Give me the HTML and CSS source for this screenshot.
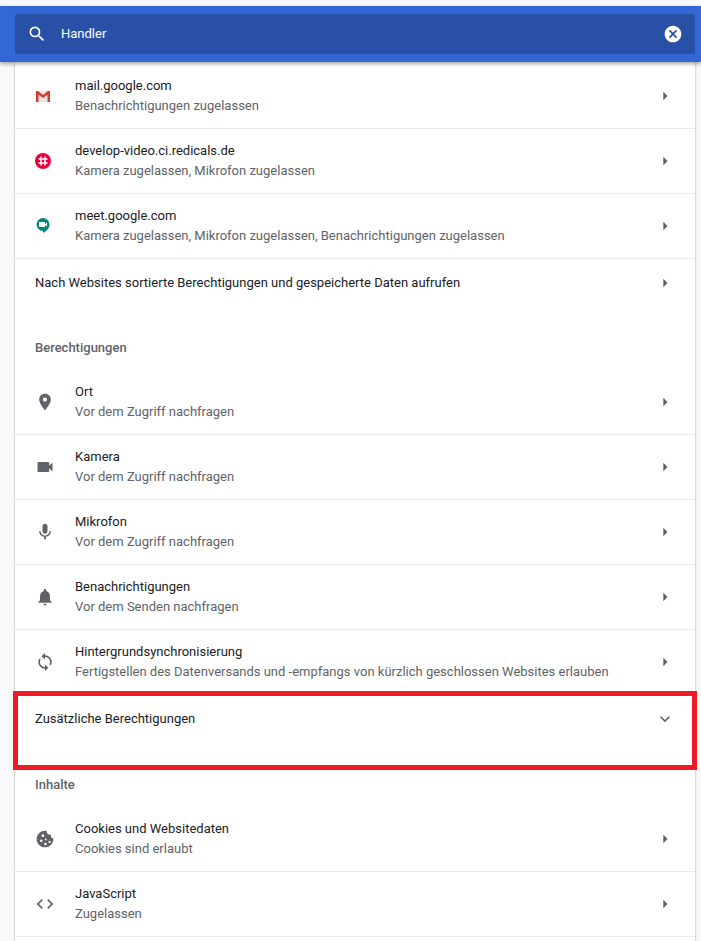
FILE: index.html
```html
<!DOCTYPE html>
<html lang="de">
<head>
    <meta charset="UTF-8">
    <meta name="viewport" content="width=device-width, initial-scale=1.0">
    <title>Einstellungen</title>
    <link rel="stylesheet" href="styles.css">
</head>
<body>
    <header class="topbar">
        <div class="search">
            <svg class="search-icon" viewBox="0 0 24 24"><path d="M15.5 14h-.79l-.28-.27A6.471 6.471 0 0 0 16 9.5 6.5 6.5 0 1 0 9.5 16c1.61 0 3.09-.59 4.23-1.57l.27.28v.79l5 4.99L20.49 19l-4.99-5zm-6 0C7.01 14 5 11.99 5 9.5S7.01 5 9.5 5 14 7.01 14 9.5 11.99 14 9.5 14z"/></svg>
            <span class="search-text">Handler</span>
            <svg class="clear-icon" viewBox="0 0 24 24"><path d="M12 2C6.47 2 2 6.47 2 12s4.47 10 10 10 10-4.47 10-10S17.53 2 12 2zm5 13.59L15.59 17 12 13.41 8.41 17 7 15.59 10.59 12 7 8.41 8.41 7 12 10.59 15.59 7 17 8.41 13.41 12 17 15.59z"/></svg>
        </div>
    </header>

    <main class="card">
        <div class="row first">
            <span class="icon">
                <svg class="favicon" viewBox="0 0 16 16">
                    <path fill="#e8e6e3" d="M1 3h14v11H1z"/>
                    <path fill="#d23f31" d="M1 3h2l5 4 5-4h2v11h-2.500V6.800L8 10 3.500 6.800V14H1z"/>
                </svg>
            </span>
            <div class="labels">
                <div class="title">mail.google.com</div>
                <div class="sub">Benachrichtigungen zugelassen</div>
            </div>
            <svg class="arrow" viewBox="0 0 24 24"><path d="M10 7l5 5-5 5z"/></svg>
        </div>
        <div class="row">
            <span class="icon">
                <svg class="favicon" viewBox="0 0 16 16">
                    <circle cx="8" cy="8" r="8" fill="#e8003d"/>
                    <path fill="none" stroke="#fff" stroke-width="1.400" d="M6 3.500v9M10 3.500v9M3.500 6h9M3.500 10h9"/>
                </svg>
            </span>
            <div class="labels">
                <div class="title">develop-video.ci.redicals.de</div>
                <div class="sub">Kamera zugelassen, Mikrofon zugelassen</div>
            </div>
            <svg class="arrow" viewBox="0 0 24 24"><path d="M10 7l5 5-5 5z"/></svg>
        </div>
        <div class="row">
            <span class="icon">
                <svg class="favicon" viewBox="0 0 16 16">
                    <path fill="#00897b" d="M8 0a6.500 6.500 0 0 0-6.500 6.500A6.500 6.500 0 0 0 8 13v2c3.500-1.500 6.500-4.800 6.500-8.500A6.500 6.500 0 0 0 8 0z"/>
                    <path fill="#fff" d="M4.500 4h5c.3 0 .5.200.5.500V6l2-1.500v4L10 7v1.500c0 .3-.2.500-.5.500h-5c-.3 0-.5-.2-.5-.5v-4c0-.3.200-.5.500-.5z"/>
                </svg>
            </span>
            <div class="labels">
                <div class="title">meet.google.com</div>
                <div class="sub">Kamera zugelassen, Mikrofon zugelassen, Benachrichtigungen zugelassen</div>
            </div>
            <svg class="arrow" viewBox="0 0 24 24"><path d="M10 7l5 5-5 5z"/></svg>
        </div>
        <div class="row short">
            <div class="labels title">Nach Websites sortierte Berechtigungen und gespeicherte Daten aufrufen</div>
            <svg class="arrow" viewBox="0 0 24 24"><path d="M10 7l5 5-5 5z"/></svg>
        </div>

        <h2 class="heading">Berechtigungen</h2>

        <div class="row first">
            <span class="icon"><svg viewBox="0 0 24 24"><path d="M12 2C8.130 2 5 5.130 5 9c0 5.250 7 13 7 13s7-7.750 7-13c0-3.870-3.130-7-7-7zm0 9.500c-1.380 0-2.500-1.120-2.500-2.500s1.120-2.500 2.500-2.500 2.500 1.120 2.500 2.500-1.120 2.500-2.500 2.500z"/></svg></span>
            <div class="labels">
                <div class="title">Ort</div>
                <div class="sub">Vor dem Zugriff nachfragen</div>
            </div>
            <svg class="arrow" viewBox="0 0 24 24"><path d="M10 7l5 5-5 5z"/></svg>
        </div>
        <div class="row">
            <span class="icon"><svg viewBox="0 0 24 24"><path d="M17 10.500V7c0-.55-.45-1-1-1H4c-.55 0-1 .45-1 1v10c0 .55.45 1 1 1h12c.55 0 1-.45 1-1v-3.500l4 4v-11l-4 4z"/></svg></span>
            <div class="labels">
                <div class="title">Kamera</div>
                <div class="sub">Vor dem Zugriff nachfragen</div>
            </div>
            <svg class="arrow" viewBox="0 0 24 24"><path d="M10 7l5 5-5 5z"/></svg>
        </div>
        <div class="row">
            <span class="icon"><svg viewBox="0 0 24 24"><path d="M12 14c1.660 0 2.990-1.340 2.990-3L15 5c0-1.660-1.340-3-3-3S9 3.340 9 5v6c0 1.660 1.340 3 3 3zm5.300-3c0 3-2.540 5.100-5.300 5.100S6.700 14 6.700 11H5c0 3.410 2.720 6.230 6 6.720V21h2v-3.280c3.280-.48 6-3.300 6-6.720h-1.700z"/></svg></span>
            <div class="labels">
                <div class="title">Mikrofon</div>
                <div class="sub">Vor dem Zugriff nachfragen</div>
            </div>
            <svg class="arrow" viewBox="0 0 24 24"><path d="M10 7l5 5-5 5z"/></svg>
        </div>
        <div class="row">
            <span class="icon"><svg viewBox="0 0 24 24"><path d="M12 22c1.100 0 2-.9 2-2h-4c0 1.100.9 2 2 2zm6-6v-5c0-3.070-1.630-5.640-4.500-6.320V4c0-.83-.67-1.500-1.500-1.500s-1.500.67-1.500 1.500v.68C7.640 5.360 6 7.920 6 11v5l-2 2v1h16v-1l-2-2z"/></svg></span>
            <div class="labels">
                <div class="title">Benachrichtigungen</div>
                <div class="sub">Vor dem Senden nachfragen</div>
            </div>
            <svg class="arrow" viewBox="0 0 24 24"><path d="M10 7l5 5-5 5z"/></svg>
        </div>
        <div class="row">
            <span class="icon"><svg viewBox="0 0 24 24"><path d="M12 4V1L8 5l4 4V6c3.310 0 6 2.690 6 6 0 1.010-.25 1.970-.7 2.800l1.460 1.460C19.540 15.030 20 13.570 20 12c0-4.420-3.580-8-8-8zm0 14c-3.310 0-6-2.690-6-6 0-1.010.25-1.970.7-2.800L5.240 7.740C4.460 8.970 4 10.430 4 12c0 4.420 3.580 8 8 8v3l4-4-4-4v3z"/></svg></span>
            <div class="labels">
                <div class="title">Hintergrundsynchronisierung</div>
                <div class="sub">Fertigstellen des Datenversands und -empfangs von kürzlich geschlossen Websites erlauben</div>
            </div>
            <svg class="arrow" viewBox="0 0 24 24"><path d="M10 7l5 5-5 5z"/></svg>
        </div>
        <div class="row short marked">
            <div class="labels title">Zusätzliche Berechtigungen</div>
            <svg class="arrow" viewBox="0 0 24 24"><path d="M16.590 8.590L12 13.170 7.410 8.590 6 10l6 6 6-6z"/></svg>
            <div class="highlight"></div>
        </div>

        <h2 class="heading contents">Inhalte</h2>

        <div class="row first">
            <span class="icon">
                <svg viewBox="0 0 24 24">
                    <path d="M21.950 10.990c-1.790-.03-3.700-1.950-2.680-4.220-2.980 1-5.770-1.590-5.190-4.560C6.950.71 2 6.580 2 12c0 5.520 4.480 10 10 10 5.890 0 10.540-5.080 9.950-11.010z"/>
                    <g class="holes">
                        <circle cx="9.500" cy="8" r="1.600"/>
                        <circle cx="7.500" cy="14" r="1.500"/>
                        <circle cx="13" cy="12.500" r="1"/>
                        <circle cx="12.500" cy="18" r="1.500"/>
                        <circle cx="17.500" cy="15.500" r="1.300"/>
                    </g>
                </svg>
            </span>
            <div class="labels">
                <div class="title">Cookies und Websitedaten</div>
                <div class="sub">Cookies sind erlaubt</div>
            </div>
            <svg class="arrow" viewBox="0 0 24 24"><path d="M10 7l5 5-5 5z"/></svg>
        </div>
        <div class="row">
            <span class="icon"><svg viewBox="0 0 24 24"><path d="M9.400 16.600L4.800 12l4.600-4.600L8 6l-6 6 6 6 1.400-1.400zm5.200 0l4.600-4.600-4.600-4.600L16 6l6 6-6 6-1.400-1.400z"/></svg></span>
            <div class="labels">
                <div class="title">JavaScript</div>
                <div class="sub">Zugelassen</div>
            </div>
            <svg class="arrow" viewBox="0 0 24 24"><path d="M10 7l5 5-5 5z"/></svg>
        </div>
        <div class="row"></div>
    </main>
</body>
</html>
```

FILE: styles.css
```css
* {
    margin: 0;
    padding: 0;
    box-sizing: border-box;
    font-family: Roboto, "Liberation Sans", sans-serif;
}

html, body {
    height: 941px;
    overflow: hidden;
}

body {
    background: #f8f9fa;
    padding-top: 6px;
}

.topbar {
    position: relative;
    z-index: 2;
    height: 56px;
    padding: 8px 6px 8px 15px;
    background: #3367d6;
    box-shadow: 0 2px 4px rgba(60, 64, 67, 0.45);
}

.search {
    display: flex;
    align-items: center;
    height: 40px;
    padding: 0 12px;
    border-radius: 2px;
    background: #2850a7;
}

.search-icon {
    width: 20px;
    height: 20px;
    fill: #fff;
}

.search-text {
    flex: 1;
    margin-left: 14px;
    padding-bottom: 2px;
    font-size: 13px;
    color: #fff;
}

.clear-icon {
    width: 20px;
    height: 20px;
    fill: #fff;
}

.card {
    width: 680px;
    margin-left: 15px;
    padding-top: 1px;
    background: #fff;
    box-shadow: 0 0 2px rgba(60, 64, 67, 0.5);
}

.row {
    position: relative;
    display: flex;
    align-items: center;
    height: 65px;
    padding: 0 20px;
    border-top: 1px solid #e8eaed;
}

.row.first {
    border-top: none;
}

.row.short {
    height: 49px;
}

.icon {
    display: flex;
    justify-content: center;
    align-items: center;
    width: 20px;
    height: 20px;
    margin-right: 20px;
}

.icon svg {
    width: 20px;
    height: 20px;
    fill: #5f6368;
}

.icon svg.favicon {
    width: 16px;
    height: 16px;
    margin-right: 4px;
}

.icon .holes {
    fill: #fff;
}

.labels {
    flex: 1;
}

.title {
    font-size: 13px;
    line-height: 20px;
    color: #202124;
}

.sub {
    font-size: 13px;
    line-height: 20px;
    color: #5f6368;
}

.arrow {
    width: 20px;
    height: 20px;
    fill: #5f6368;
}

.heading {
    height: 62px;
    padding: 31px 20px 0;
    font-size: 13px;
    font-weight: 500;
    line-height: 20px;
    color: #5f6368;
}

.heading.contents {
    height: 63px;
    padding-top: 32px;
}

.highlight {
    position: absolute;
    top: -4px;
    left: -2px;
    right: -2px;
    height: 79px;
    border: 5px solid #ed1c24;
}
```
